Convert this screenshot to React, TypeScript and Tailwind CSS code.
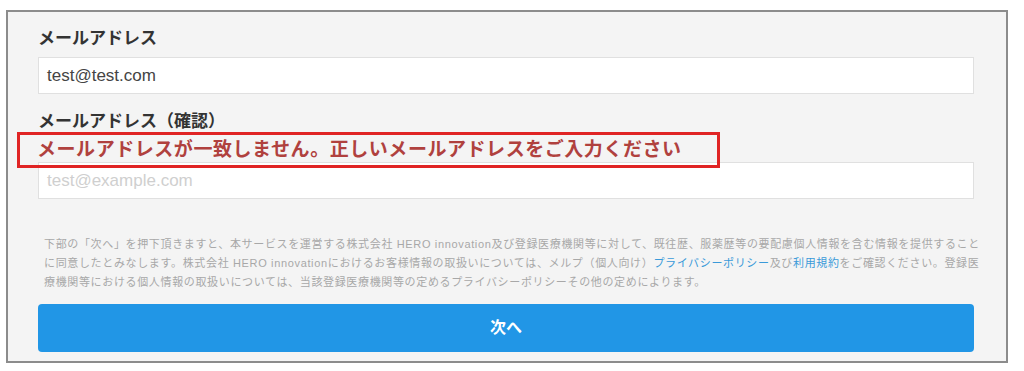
import React from "react";

const jp = { fontFamily: '"Liberation Sans", "Noto Sans CJK JP", sans-serif' };

export default function App() {
  return (
    <div className="w-[1024px] h-[371px] bg-white pt-[10px] pl-[6px]" style={jp}>
      <div className="relative w-[1002px] h-[353px] border-2 border-[#8c8c8c] bg-[#f4f4f4] pl-[30px] pr-[32px]">
        <div className="pt-[15px] text-[17px] leading-[24px] font-bold text-[#333]">メールアドレス</div>
        <div className="mt-[6px] h-[37px] bg-white border border-[#e0e0e0] flex items-center pl-[8px] text-[17px] text-[#444]">
          test@test.com
        </div>
        <div className="mt-[16px] text-[17px] leading-[24px] font-bold text-[#333]">メールアドレス（確認）</div>
        <div className="text-[19px] leading-[28px] tracking-[0.55px] font-bold text-[#b0413e] -ml-[1px] pt-[2px] h-[28px] whitespace-nowrap">
          メールアドレスが一致しません。正しいメールアドレスをご入力ください
        </div>
        <div className="h-[37px] bg-white border border-[#e0e0e0] flex items-center pl-[8px] text-[17px] text-[#cfcfcf]">
          test@example.com
        </div>
        <div className="mt-[36px] pl-[6px] text-[11px] leading-[19px] tracking-[0.65px] text-[#a8a8a8] whitespace-nowrap">
          下部の「次へ」を押下頂きますと、本サービスを運営する株式会社 HERO innovation及び登録医療機関等に対して、既往歴、服薬歴等の要配慮個人情報を含む情報を提供すること
          <br />
          に同意したとみなします。株式会社 HERO innovationにおけるお客様情報の取扱いについては、メルプ（個人向け）
          <span className="text-[#3a9ad9]">プライバシーポリシー</span>及び<span className="text-[#3a9ad9]">利用規約</span>をご確認ください。登録医
          <br />
          療機関等における個人情報の取扱いについては、当該登録医療機関等の定めるプライバシーポリシーその他の定めによります。
        </div>
        <div className="mt-[12px] h-[48px] rounded-[4px] bg-[#2196e6] flex items-center justify-center text-white text-[16px] font-bold">
          次へ
        </div>
        <div className="absolute left-[9px] top-[120px] w-[703px] h-[36px] border-[3px] border-[#e02424]" />
      </div>
    </div>
  );
}
